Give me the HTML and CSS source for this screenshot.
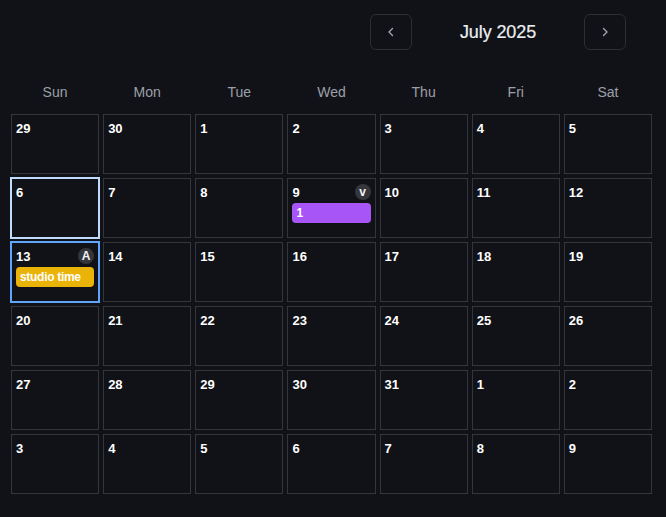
FILE: index.html
```html
<!DOCTYPE html>
<html>
<head>
<meta charset="utf-8">
<link rel="stylesheet" href="styles.css">
</head>
<body>
<div class="app">
  <div class="header">
    <button class="nav-btn" aria-label="Previous month">
      <svg width="12" height="12" viewBox="0 0 12 12"><path d="M7.5 2.5 L4 6 L7.5 9.5" fill="none" stroke="#a1a5ad" stroke-width="1.4" stroke-linecap="round" stroke-linejoin="round"/></svg>
    </button>
    <div class="title">July 2025</div>
    <button class="nav-btn" aria-label="Next month">
      <svg width="12" height="12" viewBox="0 0 12 12"><path d="M4.5 2.5 L8 6 L4.5 9.5" fill="none" stroke="#a1a5ad" stroke-width="1.4" stroke-linecap="round" stroke-linejoin="round"/></svg>
    </button>
  </div>
  <div class="weekdays">
    <div>Sun</div><div>Mon</div><div>Tue</div><div>Wed</div><div>Thu</div><div>Fri</div><div>Sat</div>
  </div>
  <div class="grid">
    <div class="cell"><div class="top"><span class="num">29</span></div></div>
    <div class="cell"><div class="top"><span class="num">30</span></div></div>
    <div class="cell"><div class="top"><span class="num">1</span></div></div>
    <div class="cell"><div class="top"><span class="num">2</span></div></div>
    <div class="cell"><div class="top"><span class="num">3</span></div></div>
    <div class="cell"><div class="top"><span class="num">4</span></div></div>
    <div class="cell"><div class="top"><span class="num">5</span></div></div>

    <div class="cell today"><div class="top"><span class="num">6</span></div></div>
    <div class="cell"><div class="top"><span class="num">7</span></div></div>
    <div class="cell"><div class="top"><span class="num">8</span></div></div>
    <div class="cell"><div class="top"><span class="num">9</span><span class="badge">v</span></div><div class="event purple">1</div></div>
    <div class="cell"><div class="top"><span class="num">10</span></div></div>
    <div class="cell"><div class="top"><span class="num">11</span></div></div>
    <div class="cell"><div class="top"><span class="num">12</span></div></div>

    <div class="cell selected"><div class="top"><span class="num">13</span><span class="badge">A</span></div><div class="event yellow">studio time</div></div>
    <div class="cell"><div class="top"><span class="num">14</span></div></div>
    <div class="cell"><div class="top"><span class="num">15</span></div></div>
    <div class="cell"><div class="top"><span class="num">16</span></div></div>
    <div class="cell"><div class="top"><span class="num">17</span></div></div>
    <div class="cell"><div class="top"><span class="num">18</span></div></div>
    <div class="cell"><div class="top"><span class="num">19</span></div></div>

    <div class="cell"><div class="top"><span class="num">20</span></div></div>
    <div class="cell"><div class="top"><span class="num">21</span></div></div>
    <div class="cell"><div class="top"><span class="num">22</span></div></div>
    <div class="cell"><div class="top"><span class="num">23</span></div></div>
    <div class="cell"><div class="top"><span class="num">24</span></div></div>
    <div class="cell"><div class="top"><span class="num">25</span></div></div>
    <div class="cell"><div class="top"><span class="num">26</span></div></div>

    <div class="cell"><div class="top"><span class="num">27</span></div></div>
    <div class="cell"><div class="top"><span class="num">28</span></div></div>
    <div class="cell"><div class="top"><span class="num">29</span></div></div>
    <div class="cell"><div class="top"><span class="num">30</span></div></div>
    <div class="cell"><div class="top"><span class="num">31</span></div></div>
    <div class="cell"><div class="top"><span class="num">1</span></div></div>
    <div class="cell"><div class="top"><span class="num">2</span></div></div>

    <div class="cell"><div class="top"><span class="num">3</span></div></div>
    <div class="cell"><div class="top"><span class="num">4</span></div></div>
    <div class="cell"><div class="top"><span class="num">5</span></div></div>
    <div class="cell"><div class="top"><span class="num">6</span></div></div>
    <div class="cell"><div class="top"><span class="num">7</span></div></div>
    <div class="cell"><div class="top"><span class="num">8</span></div></div>
    <div class="cell"><div class="top"><span class="num">9</span></div></div>
  </div>
</div>
</body>
</html>
```
FILE: styles.css
```css
html, body {
  margin: 0;
  padding: 0;
  background: #111217;
  height: 100%;
}
body {
  font-family: "Liberation Sans", Arial, sans-serif;
  color: #f3f4f6;
}
.app {
  padding: 14px 14px 0 11px;
}
.header {
  display: flex;
  justify-content: flex-end;
  align-items: center;
  padding-right: 26px;
  height: 36px;
}
.nav-btn {
  width: 42px;
  height: 36px;
  box-sizing: border-box;
  border: 1px solid #2c2e34;
  border-radius: 6px;
  background: #111217;
  display: flex;
  align-items: center;
  justify-content: center;
  padding: 0;
}
.title {
  width: 172px;
  text-align: center;
  font-size: 18px;
  color: #eceef1;
  letter-spacing: -0.1px;
  -webkit-text-stroke: 0.2px #eceef1;
}
.weekdays {
  display: grid;
  grid-template-columns: repeat(7, 1fr);
  column-gap: 4px;
  margin-top: 32px;
  margin-bottom: 12px;
  height: 20px;
  line-height: 20px;
  font-size: 14px;
  color: #9ca0a8;
  text-align: center;
}
.grid {
  display: grid;
  grid-template-columns: repeat(7, 1fr);
  grid-auto-rows: 60px;
  gap: 4px;
}
.cell {
  border: 1px solid #34363b;
  padding: 5px 4px;
  box-sizing: border-box;
  min-width: 0;
}
.cell.today {
  border-color: #bfdcff;
  box-shadow: 0 0 0 1px #bfdcff;
}
.cell.selected {
  border-color: #60a5fa;
  box-shadow: 0 0 0 1px #60a5fa;
}
.top {
  display: flex;
  justify-content: space-between;
  align-items: center;
  height: 16px;
}
.num {
  font-size: 13px;
  font-weight: 700;
  color: #ffffff;
}
.badge {
  width: 16px;
  height: 16px;
  border-radius: 50%;
  background: #34363c;
  color: #f2f3f5;
  font-size: 12px;
  font-weight: 700;
  display: flex;
  align-items: center;
  justify-content: center;
  line-height: 1;
}
.event {
  margin-top: 3px;
  height: 20px;
  line-height: 20px;
  border-radius: 4px;
  padding: 0 4px;
  font-size: 12px;
  font-weight: 700;
  color: #ffffff;
  white-space: nowrap;
  overflow: hidden;
  letter-spacing: -0.3px;
}
.event.purple {
  background: #a855f7;
}
.event.yellow {
  background: #eab308;
}
```
